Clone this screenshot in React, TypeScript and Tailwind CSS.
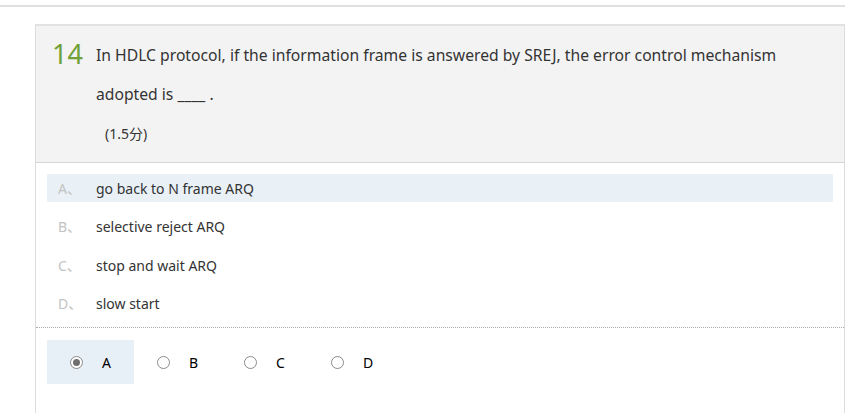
const options = [
  { key: "A", text: "go back to N frame ARQ" },
  { key: "B", text: "selective reject ARQ" },
  { key: "C", text: "stop and wait ARQ" },
  { key: "D", text: "slow start" },
];

const picked = "A";

function Radio({ checked }: { checked: boolean }) {
  return (
    <span className="flex h-[13px] w-[13px] items-center justify-center rounded-full border border-[#8a8a8a] bg-white">
      {checked && <span className="h-[7px] w-[7px] rounded-full bg-[#6f6f6f]" />}
    </span>
  );
}

export default function App() {
  return (
    <div
      className="h-[413px] w-[845px] overflow-hidden bg-white text-[#333]"
      style={{ fontFamily: '"Noto Sans", "Noto Sans CJK SC", sans-serif' }}
    >
      <div className="h-[5px]" />
      <div className="h-[2px] w-full bg-[#e0e0e0]" />
      <div className="h-[17px]" />
      <div className="ml-[35px] h-[390px] border-l border-r border-t-2 border-[#e2e2e2] border-l-[#dcdcdc] border-r-[#dcdcdc]">
        {/* question header */}
        <div className="border-b border-[#d6d6d6] bg-[#f3f3f3] pb-[9px] pl-[16px] pr-[30px] pt-[10px]">
          <div className="flex items-start">
            <span className="w-[44px] shrink-0 text-[27px] leading-[36px] text-[#6fa03a]">14</span>
            <p className="text-[15.7px] leading-[39px] text-[#333]">
              In HDLC protocol, if the information frame is answered by SREJ, the error control mechanism adopted is ____ .
            </p>
          </div>
          <div className="pl-[53px] text-[14px] leading-[39px]">(1.5分)</div>
        </div>

        {/* options */}
        <div className="px-[11px] pt-[11px]">
          {options.map((o) => (
            <div
              key={o.key}
              className={`mb-[10.5px] flex h-[28px] items-center text-[14px] ${o.key === "A" ? "bg-[#e9f1f7]" : ""}`}
            >
              <span className="w-[49px] pl-[11px] text-[#c3c3c3]">{o.key}、</span>
              <span className="text-[#333]">{o.text}</span>
            </div>
          ))}
        </div>

        <div className="mt-[-1px] border-t border-dotted border-[#aaa]" />

        {/* answer row */}
        <div className="flex pl-[11px] pt-[12px]">
          {options.map((o) => (
            <label
              key={o.key}
              className={`flex h-[44px] w-[87px] items-center gap-[19px] pl-[23px] text-[14px] text-black ${o.key === picked ? "bg-[#e8f0f7]" : ""}`}
            >
              <Radio checked={o.key === picked} />
              <span>{o.key}</span>
            </label>
          ))}
        </div>
      </div>
    </div>
  );
}
